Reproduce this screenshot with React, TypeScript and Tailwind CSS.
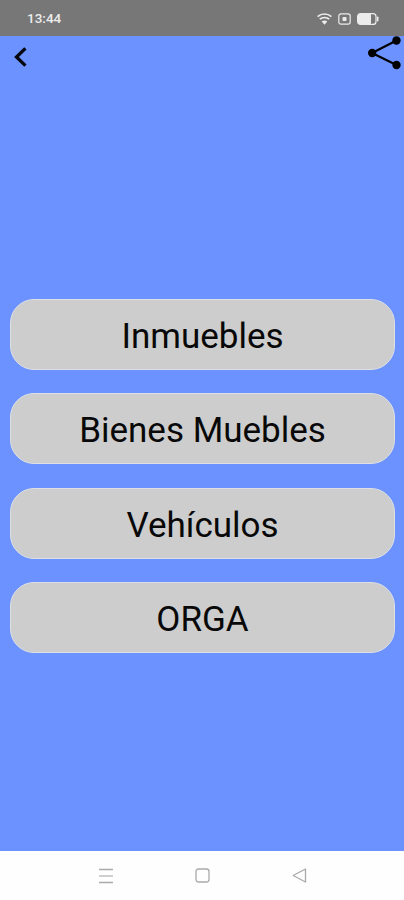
const categories: string[] = ['Inmuebles', 'Bienes Muebles', 'Vehículos', 'ORGA'];

const StatusBar: React.FC = () => {
  return (
    <div className="flex h-9 items-center justify-between bg-[#777777] pl-[27px] pr-[25px] text-[#ececec]">
      <span className="text-[13.5px] font-medium">13:44</span>
      <div className="flex items-center gap-[6px] pt-px">
        <svg width="15" height="12" viewBox="0 0 15 12" fill="none" stroke="currentColor" strokeWidth="1.7">
          <path d="M0.6 3.6C4.4 0.1 10.6 0.1 14.4 3.6" />
          <path d="M2.8 6.2C5.4 3.9 9.6 3.9 12.2 6.2" />
          <path d="M4.7 8.6C6.3 7.2 8.7 7.2 10.3 8.6L7.5 11.8Z" fill="currentColor" stroke="none" />
        </svg>
        <svg width="13" height="12" viewBox="0 0 13 12" fill="none" stroke="currentColor">
          <rect x="0.8" y="0.8" width="11.4" height="10.4" rx="2.2" strokeWidth="1.2" />
          <rect x="4.5" y="4" width="4" height="4" rx="1" fill="currentColor" stroke="none" />
        </svg>
        <svg width="22" height="12" viewBox="0 0 22 12" fill="none" stroke="currentColor">
          <rect x="0.6" y="0.6" width="18.4" height="10.8" rx="3" strokeWidth="1.2" />
          <path d="M3 1.5H13.5V10.5H3A1.5 1.5 0 0 1 1.5 9V3A1.5 1.5 0 0 1 3 1.5Z" fill="currentColor" />
          <path d="M20.7 4.2V7.8" strokeWidth="1.6" strokeLinecap="round" />
        </svg>
      </div>
    </div>
  );
};

const Header: React.FC = () => {
  return (
    <header className="flex h-9 items-start justify-between pl-[14px] pr-[2px]">
      <button aria-label="Atrás" className="mt-[11px]">
        <svg width="13" height="20" viewBox="0 0 13 20" fill="none" stroke="#05070d" strokeWidth="3.3">
          <path d="M11.4 1.4L2.5 10L11.4 18.6" />
        </svg>
      </button>
      <button aria-label="Compartir">
        <svg width="34" height="34" viewBox="0 0 34 34" fill="#000" stroke="#000">
          <path d="M28.5 4.5L4 17L28.5 29" fill="none" strokeWidth="2.2" />
          <circle cx="28.5" cy="4.5" r="4.2" stroke="none" />
          <circle cx="4.2" cy="17" r="4.2" stroke="none" />
          <circle cx="28.5" cy="29" r="4.2" stroke="none" />
        </svg>
      </button>
    </header>
  );
};

const NavBar: React.FC = () => {
  return (
    <nav className="flex h-[49px] items-center justify-between bg-[#fefefe] pl-[99px] pr-[97px] text-[#aaaaaa]">
      <svg width="14" height="16" viewBox="0 0 14 16" stroke="currentColor" strokeWidth="1.5">
        <path d="M0 1.5H14M0 14.5H14" />
        <path d="M0 8H14" stroke="#cfcfcf" strokeWidth="2" />
      </svg>
      <svg width="15" height="15" viewBox="0 0 15 15" fill="none" stroke="currentColor" strokeWidth="1.3">
        <rect x="1" y="1" width="13" height="13" rx="2.5" />
      </svg>
      <svg width="15" height="15" viewBox="0 0 15 15" fill="none" stroke="currentColor" strokeWidth="1.3" strokeLinejoin="round">
        <path d="M13.5 1V14L1.2 7.5Z" />
      </svg>
    </nav>
  );
};

const App: React.FC = () => {
  return (
    <div className="flex h-[900px] w-[404px] flex-col overflow-hidden bg-[#6b92ff] font-[Roboto,sans-serif]">
      <StatusBar />
      <Header />
      <main className="flex flex-1 flex-col gap-[23.4px] pl-[10px] pr-[9px] pt-[227px]">
        {categories.map((category) => (
          <button
            key={category}
            className="h-[71px] w-full rounded-[24px] border border-[#dcdfe4] bg-[#cdcdcd] pt-[4px] text-[35px] leading-none text-[#080808]">
            {category}
          </button>
        ))}
      </main>
      <NavBar />
    </div>
  );
};

export default App;
